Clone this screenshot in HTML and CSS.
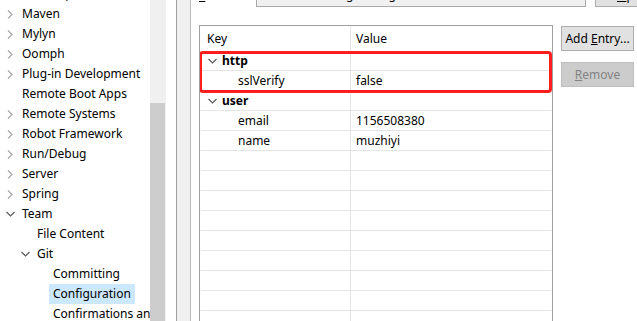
FILE: index.html
```html
<!DOCTYPE html>
<html lang="en">
<head>
  <meta charset="UTF-8">
  <title>Preferences - Git Configuration</title>
  <link rel="stylesheet" href="styles.css">
</head>
<body>
  <div class="app">
    <div class="tree">
      <div class="tree-list">
        <div class="node l0"><span class="twisty"><svg class="closed" width="6" height="9"><polyline points="1,0.5 5,4.5 1,8.5"/></svg></span><span class="label">JavaScript</span></div>
        <div class="node l0"><span class="twisty"><svg class="closed" width="6" height="9"><polyline points="1,0.5 5,4.5 1,8.5"/></svg></span><span class="label">Maven</span></div>
        <div class="node l0"><span class="twisty"><svg class="closed" width="6" height="9"><polyline points="1,0.5 5,4.5 1,8.5"/></svg></span><span class="label">Mylyn</span></div>
        <div class="node l0"><span class="twisty"><svg class="closed" width="6" height="9"><polyline points="1,0.5 5,4.5 1,8.5"/></svg></span><span class="label">Oomph</span></div>
        <div class="node l0"><span class="twisty"><svg class="closed" width="6" height="9"><polyline points="1,0.5 5,4.5 1,8.5"/></svg></span><span class="label">Plug-in Development</span></div>
        <div class="node l0"><span class="twisty"></span><span class="label">Remote Boot Apps</span></div>
        <div class="node l0"><span class="twisty"><svg class="closed" width="6" height="9"><polyline points="1,0.5 5,4.5 1,8.5"/></svg></span><span class="label">Remote Systems</span></div>
        <div class="node l0"><span class="twisty"><svg class="closed" width="6" height="9"><polyline points="1,0.5 5,4.5 1,8.5"/></svg></span><span class="label">Robot Framework</span></div>
        <div class="node l0"><span class="twisty"><svg class="closed" width="6" height="9"><polyline points="1,0.5 5,4.5 1,8.5"/></svg></span><span class="label">Run/Debug</span></div>
        <div class="node l0"><span class="twisty"><svg class="closed" width="6" height="9"><polyline points="1,0.5 5,4.5 1,8.5"/></svg></span><span class="label">Server</span></div>
        <div class="node l0"><span class="twisty"><svg class="closed" width="6" height="9"><polyline points="1,0.5 5,4.5 1,8.5"/></svg></span><span class="label">Spring</span></div>
        <div class="node l0"><span class="twisty"><svg class="open" width="9" height="6"><polyline points="0.5,1 4.5,5 8.5,1"/></svg></span><span class="label">Team</span></div>
        <div class="node l1"><span class="twisty"></span><span class="label">File Content</span></div>
        <div class="node l1"><span class="twisty"><svg class="open" width="9" height="6"><polyline points="0.5,1 4.5,5 8.5,1"/></svg></span><span class="label">Git</span></div>
        <div class="node l2"><span class="twisty"></span><span class="label">Committing</span></div>
        <div class="node l2 selected"><span class="twisty"></span><span class="label">Configuration</span></div>
        <div class="node l2"><span class="twisty"></span><span class="label">Confirmations and Warnings</span></div>
      </div>
    </div>

    <div class="vscroll"><div class="thumb"></div></div>
    <div class="tree-gap"></div>
    <div class="sash"></div>

    <div class="page">
      <div class="location-row">
        <span class="loc-label"><u>L</u>ocation:</span>
        <div class="loc-field">C:\Users\asus\.gitconfig</div>
        <button class="btn open-btn"><u>O</u>pen</button>
      </div>

      <div class="main">
        <div class="config-table">
          <div class="row header">
            <div class="cell key">Key</div>
            <div class="cell value">Value</div>
          </div>
          <div class="row">
            <div class="cell key group"><span class="twisty-sm"><svg class="open" width="9" height="6"><polyline points="0.5,1 4.5,5 8.5,1"/></svg></span>http</div>
            <div class="cell value"></div>
          </div>
          <div class="row">
            <div class="cell key child">sslVerify</div>
            <div class="cell value">false</div>
          </div>
          <div class="row">
            <div class="cell key group"><span class="twisty-sm"><svg class="open" width="9" height="6"><polyline points="0.5,1 4.5,5 8.5,1"/></svg></span>user</div>
            <div class="cell value"></div>
          </div>
          <div class="row">
            <div class="cell key child">email</div>
            <div class="cell value">1156508380</div>
          </div>
          <div class="row">
            <div class="cell key child">name</div>
            <div class="cell value">muzhiyi</div>
          </div>
          <div class="row"><div class="cell key"></div><div class="cell value"></div></div>
          <div class="row"><div class="cell key"></div><div class="cell value"></div></div>
          <div class="row"><div class="cell key"></div><div class="cell value"></div></div>
          <div class="row"><div class="cell key"></div><div class="cell value"></div></div>
          <div class="row"><div class="cell key"></div><div class="cell value"></div></div>
          <div class="row"><div class="cell key"></div><div class="cell value"></div></div>
          <div class="row"><div class="cell key"></div><div class="cell value"></div></div>
          <div class="row"><div class="cell key"></div><div class="cell value"></div></div>
          <div class="row"><div class="cell key"></div><div class="cell value"></div></div>

          <!-- highlight drawn over the http section -->
          <div class="mark"></div>
        </div>

        <div class="side">
          <button class="btn">Add <u>E</u>ntry...</button>
          <button class="btn" disabled><u>R</u>emove</button>
        </div>
      </div>
    </div>
  </div>
</body>
</html>
```

FILE: styles.css
```css
html, body {
  margin: 0;
  overflow: hidden;
}

body {
  background-color: #fff;
  color: #000;
  font-family: "Noto Sans", "Open Sans", sans-serif;
  font-size: 12px;
}

.app {
  width: 637px;
  height: 321px;
  overflow: hidden;
  display: flex;
}

/* left preference tree */
.tree {
  width: 150px;
  flex: none;
  overflow: hidden;
}

.tree-list {
  margin-top: -16px;
}

.node {
  height: 20px;
  line-height: 20px;
  display: flex;
  align-items: center;
  white-space: nowrap;
}

.node.l0 { padding-left: 2px; }
.node.l1 { padding-left: 17px; }
.node.l2 { padding-left: 33px; }

.twisty {
  width: 16px;
  height: 20px;
  flex: none;
  display: flex;
  align-items: center;
  justify-content: center;
}

.label {
  padding: 0 4px;
  height: 20px;
}

.node.selected .label {
  background-color: #cce8ff;
}

svg polyline {
  fill: none;
  stroke-width: 1.2;
}

svg.closed polyline {
  stroke: #a6a6a6;
}

svg.open polyline {
  stroke: #5a5a5a;
}

.vscroll {
  width: 16px;
  flex: none;
  overflow: hidden;
  background-color: #f0f0f0;
}

.thumb {
  margin-top: 103px;
  width: 15px;
  height: 240px;
  background-color: #cdcdcd;
}

.tree-gap {
  width: 10px;
  flex: none;
}

.sash {
  width: 13px;
  flex: none;
  background-color: #f0f0f0;
  border-left: 1px solid #a0a0a0;
  border-right: 1px solid #b9b9b9;
}

/* right page */
.page {
  flex: 1;
  min-width: 0;
  overflow: hidden;
  padding-left: 8px;
  display: flex;
  flex-direction: column;
}

.location-row {
  margin-top: -17px;
  height: 24px;
  flex: none;
  display: flex;
  align-items: center;
  white-space: nowrap;
}

.loc-label {
  width: 57px;
  flex: none;
}

.loc-field {
  width: 330px;
  height: 24px;
  flex: none;
  box-sizing: border-box;
  padding-left: 4px;
  line-height: 22px;
  border: 1px solid #a9a9a9;
  background-color: #f0f0f0;
}

.btn {
  width: 73px;
  height: 25px;
  padding: 0;
  font-family: inherit;
  font-size: 12px;
  color: #000;
  background-color: #e1e1e1;
  border: 1px solid #adadad;
  border-radius: 0;
}

.btn:disabled {
  color: #838383;
  background-color: #cccccc;
  border-color: #bfbfbf;
}

.open-btn {
  flex: none;
  width: 75px;
  height: 24px;
  margin-left: 9px;
}

.main {
  flex: 1;
  min-height: 0;
  margin-top: 18px;
  display: flex;
  gap: 8px;
}

.config-table {
  position: relative;
  width: 354px;
  flex: none;
  overflow: hidden;
  box-sizing: border-box;
  padding: 0 1px;
  border: 1px solid #a0a0a0;
  border-bottom: none;
}

.row {
  height: 20px;
  box-sizing: border-box;
  display: grid;
  grid-template-columns: 150px 1fr;
  border-bottom: 1px solid #e5e5e5;
}

.row.header {
  height: 25px;
  border-bottom: none;
}

.cell {
  line-height: 19px;
  white-space: nowrap;
  overflow: hidden;
}

.header .cell {
  line-height: 25px;
}

.cell.key {
  padding-left: 6px;
  border-right: 1px solid #e5e5e5;
}

.cell.value {
  padding-left: 5px;
}

.cell.group {
  padding-left: 5px;
  font-weight: bold;
  display: flex;
  align-items: center;
}

.twisty-sm {
  width: 12px;
  margin-right: 4px;
  display: flex;
  justify-content: center;
}

.cell.child {
  padding-left: 37px;
}

.mark {
  position: absolute;
  left: -1px;
  top: 25px;
  width: 353px;
  height: 42px;
  box-sizing: border-box;
  border: 3px solid #ff1e1e;
  border-radius: 4px;
  pointer-events: none;
}

.side {
  display: flex;
  flex-direction: column;
  gap: 11px;
  padding-top: 1px;
}
```
